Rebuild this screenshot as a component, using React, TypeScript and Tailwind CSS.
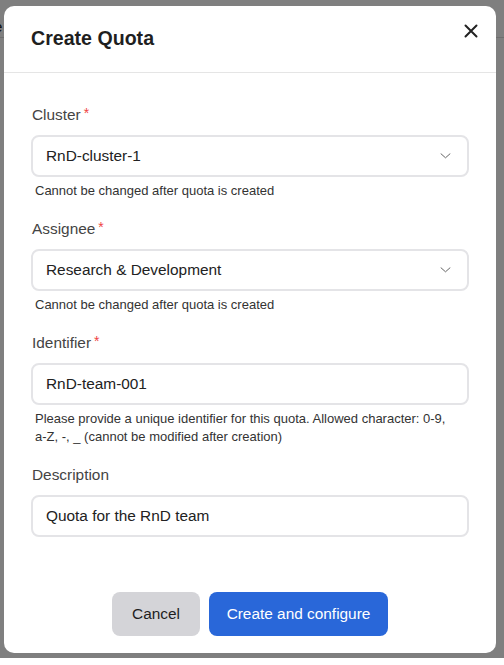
import React from 'react';

const font = { fontFamily: '"Liberation Sans", Arial, sans-serif' };

function Chevron() {
  return (
    <svg width="11" height="6" viewBox="0 0 11 6" fill="none" className="shrink-0">
      <path d="M1 0.8 L5.5 4.8 L10 0.8" stroke="#666" strokeWidth="1" strokeLinecap="round" strokeLinejoin="round" />
    </svg>
  );
}

function Label({ text, required }: { text: string; required?: boolean }) {
  return (
    <div className="flex items-start text-[15.4px] leading-[22px] text-[#444] mb-[9px] pl-[1px]">
      <span>{text}</span>
      {required && <span className="text-[#ef4444] text-[14px] leading-[18px] ml-[3px]">*</span>}
    </div>
  );
}

function Field({
  label,
  value,
  required,
  select,
  help,
}: {
  label: string;
  value: string;
  required?: boolean;
  select?: boolean;
  help?: string;
}) {
  return (
    <div className="flex flex-col">
      <Label text={label} required={required} />
      <div className="h-[42px] rounded-lg border-2 border-[#e4e4e7] bg-white flex items-center justify-between pl-[13px] pr-[16px] text-[15.4px] text-[#222]">
        <span>{value}</span>
        {select && <Chevron />}
      </div>
      {help && <p className="mt-[5px] pl-[4px] pr-[10px] text-[13px] leading-[18px] text-[#333]">{help}</p>}
    </div>
  );
}

export default function App() {
  return (
    <div className="relative h-[665px] w-[504px] bg-white overflow-hidden" style={font}>
      {/* page underneath the dialog */}
      <div className="absolute left-[-6px] top-[16px] text-[15px] text-[#222]">e</div>
      <div className="absolute left-0 right-0 top-[37px] border-t border-[#ddd]" />
      <div className="absolute left-[-5px] top-[60px] text-[15px] text-[#1e3a8a]">r</div>

      <div className="absolute left-0 top-0 w-full h-[658px] bg-black/50 pt-[6px] pl-[4px]">
        <div className="relative w-[492px] h-[647px] bg-white rounded-[10px] flex flex-col">
          <div className="h-[66px] flex items-center px-[27px] border-b border-[#e5e5e5] box-content">
            <h2 className="text-[19.6px] font-bold text-[#1f1f1f]">Create Quota</h2>
          </div>
          <button className="absolute top-[18px] right-[18px] w-[14px] h-[14px] flex items-center justify-center">
            <svg width="14" height="14" viewBox="0 0 14 14">
              <path d="M1.5 1.5 L12.5 12.5 M12.5 1.5 L1.5 12.5" stroke="#222" strokeWidth="2" strokeLinecap="round" />
            </svg>
          </button>

          <div className="px-[27px] pt-[31px] flex flex-col gap-[18px]">
            <Field label="Cluster" value="RnD-cluster-1" required select help="Cannot be changed after quota is created" />
            <Field label="Assignee" value="Research & Development" required select help="Cannot be changed after quota is created" />
            <Field
              label="Identifier"
              value="RnD-team-001"
              required
              help="Please provide a unique identifier for this quota. Allowed character: 0-9, a-Z, -, _ (cannot be modified after creation)"
            />
            <Field label="Description" value="Quota for the RnD team" />
          </div>

          <div className="flex justify-center gap-[9px] pt-[55px]">
            <button className="h-[44px] w-[88px] rounded-lg bg-[#d4d4d8] text-[15.4px] text-[#1f1f1f]">Cancel</button>
            <button className="h-[44px] w-[179px] rounded-lg bg-[#2967d9] text-[15.4px] text-white">Create and configure</button>
          </div>
        </div>
      </div>
    </div>
  );
}
